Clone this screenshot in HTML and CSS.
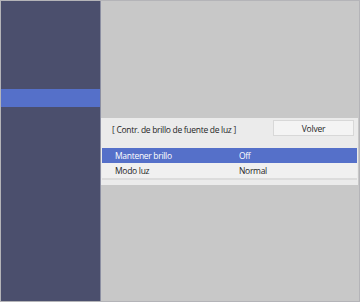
FILE: index.html
```html
<!DOCTYPE html>
<html lang="es">
<head>
<meta charset="utf-8">
<link rel="stylesheet" href="styles.css">
</head>
<body>
<div class="screen">
  <aside class="sidebar">
    <div class="side-sel"></div>
  </aside>
  <main class="main">
    <section class="panel">
      <div class="panel-head">
        <span class="title">[ Contr. de brillo de fuente de luz ]</span>
        <button class="btn">Volver</button>
      </div>
      <div class="rows">
        <div class="row sel"><span class="label">Mantener brillo</span><span class="value">Off</span></div>
        <div class="row"><span class="label">Modo luz</span><span class="value">Normal</span></div>
      </div>
    </section>
  </main>
</div>
</body>
</html>
```
FILE: styles.css
```css
* { box-sizing: border-box; }
html, body { margin: 0; padding: 0; }
body { width: 360px; height: 302px; overflow: hidden; font-family: "Open Sans", "Noto Sans", sans-serif; }
.screen {
  width: 360px; height: 302px;
  display: flex;
  border: 1px solid #b4b4b8;
  background: #c8c8c8;
}
.sidebar {
  width: 100px;
  background: #4b4f6d;
  border-right: 1px solid #8c8fa2;
  padding-top: 88px;
}
.side-sel { height: 18px; background: #5570c9; }
.main { flex: 1; padding-top: 117px; padding-right: 1px; }
.panel {
  background: #ebebeb;
  padding-bottom: 5px;
}
.panel-head {
  height: 30px;
  display: flex; align-items: flex-start; justify-content: space-between;
  padding: 2px 4px 0 11px;
}
.title { font-size: 8.5px; letter-spacing: -0.3px; line-height: 12px; margin-top: 4px; color: #262626; }
.btn {
  width: 81px; height: 16px;
  background: #f4f4f4;
  border: 1px solid #d8d8d8;
  font-family: inherit; font-size: 8.5px; letter-spacing: -0.2px; color: #262626;
  padding: 0;
}
.rows { padding: 0 1px; }
.row { height: 15px; display: flex; align-items: center; font-size: 8.5px; letter-spacing: -0.3px; color: #262626; background: #f0f0f0; }
.row + .row { height: 17px; border-bottom: 2px solid #dcdcdc; }
.row.sel { background: #5570c9; color: #fff; }
.label { width: 137px; padding-left: 13px; }
```
